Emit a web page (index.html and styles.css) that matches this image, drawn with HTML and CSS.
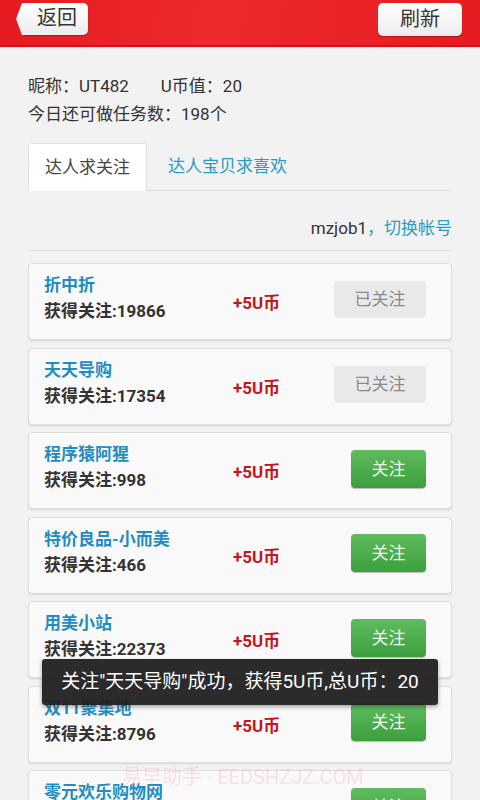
FILE: index.html
```html
<!DOCTYPE html>
<html lang="zh-CN">
<head>
<meta charset="utf-8">
<title>达人求关注</title>
<link rel="stylesheet" href="styles.css">
</head>
<body>
<div class="app">
  <header class="topbar">
    <div class="btn-back">返回</div>
    <div class="btn-refresh">刷新</div>
  </header>
  <main class="content">
    <div class="info">
      <div class="info-line"><span>昵称：UT482</span><span class="coins">U币值：20</span></div>
      <div class="info-line">今日还可做任务数：198个</div>
    </div>
    <nav class="tabs">
      <div class="tab active">达人求关注</div>
      <div class="tab">达人宝贝求喜欢</div>
    </nav>
    <div class="account">mzjob1<span class="link">，切换帐号</span></div>
    <ul class="list">
      <li class="card">
        <div class="meta"><div class="name">折中折</div><div class="count">获得关注:19866</div></div>
        <div class="reward">+5U币</div>
        <div class="btn done">已关注</div>
      </li>
      <li class="card">
        <div class="meta"><div class="name">天天导购</div><div class="count">获得关注:17354</div></div>
        <div class="reward">+5U币</div>
        <div class="btn done">已关注</div>
      </li>
      <li class="card">
        <div class="meta"><div class="name">程序猿阿猩</div><div class="count">获得关注:998</div></div>
        <div class="reward">+5U币</div>
        <div class="btn follow">关注</div>
      </li>
      <li class="card">
        <div class="meta"><div class="name">特价良品-小而美</div><div class="count">获得关注:466</div></div>
        <div class="reward">+5U币</div>
        <div class="btn follow">关注</div>
      </li>
      <li class="card">
        <div class="meta"><div class="name">用美小站</div><div class="count">获得关注:22373</div></div>
        <div class="reward">+5U币</div>
        <div class="btn follow">关注</div>
      </li>
      <li class="card">
        <div class="meta"><div class="name">双11聚集地</div><div class="count">获得关注:8796</div></div>
        <div class="reward">+5U币</div>
        <div class="btn follow">关注</div>
      </li>
      <li class="card">
        <div class="meta"><div class="name">零元欢乐购物网</div><div class="count">获得关注:5120</div></div>
        <div class="reward">+5U币</div>
        <div class="btn follow">关注</div>
      </li>
    </ul>
  </main>
  <div class="toast">关注"天天导购"成功，获得5U币,总U币：20</div>
  <div class="watermark">易早助手 · EEDSHZJZ.COM</div>
</div>
</body>
</html>
```
FILE: styles.css
```css
* { box-sizing: border-box; }
html, body { margin: 0; padding: 0; }
body {
  width: 480px;
  height: 800px;
  overflow: hidden;
  background: #f2f2f2;
  font-family: Roboto, "Noto Sans CJK SC", sans-serif;
  color: #333;
}
.app { position: relative; width: 480px; height: 800px; overflow: hidden; }

.topbar {
  height: 47px;
  display: flex;
  justify-content: space-between;
  align-items: flex-start;
  padding: 3px 18px 0 24px;
  background: linear-gradient(100deg, #e51b21 0%, #ee2a2e 45%, #e41c22 100%);
  border-bottom: 2px solid #c9151b;
  box-shadow: 0 1px 0 #f7d9d9;
}
.btn-back, .btn-refresh {
  position: relative;
  height: 32px;
  line-height: 31px;
  font-size: 20px;
  color: #333;
  text-align: center;
  background: linear-gradient(#ffffff, #ececec);
  border-radius: 5px;
  box-shadow: 0 1px 1px rgba(120,0,0,0.45);
}
.btn-back {
  width: 64px;
  border-radius: 0 5px 5px 0;
  padding-left: 2px;
}
.btn-back::before {
  content: "";
  position: absolute;
  left: -8px;
  top: 0;
  width: 10px;
  height: 32px;
  background: linear-gradient(#ffffff, #ececec);
  clip-path: polygon(100% 0, 60% 0, 0 50%, 60% 100%, 100% 100%);
}
.btn-refresh { width: 84px; height: 33px; line-height: 32px; }

.content { padding: 25px 28px 0 28px; }
.info { font-size: 17px; }
.info-line { line-height: 28px; }
.coins { margin-left: 32px; }

.tabs {
  margin-top: 15px;
  display: flex;
  align-items: flex-end;
  border-bottom: 1px solid #dcdcdc;
}
.tab {
  font-size: 17px;
  height: 47px;
  line-height: 46px;
  padding: 0 20px 0 20px;
  color: #2a9bc4;
}
.tab.active {
  width: 119px;
  padding: 0;
  text-align: center;
  color: #444;
  background: #fff;
  border: 1px solid #e0e0e0;
  border-bottom: none;
  border-radius: 4px 4px 0 0;
  margin-bottom: -1px;
  height: 48px;
}
.tab + .tab { padding-left: 21px; }

.account {
  text-align: right;
  font-size: 17px;
  line-height: 26px;
  padding: 24px 0 9px;
  border-bottom: 1px solid #dcdcdc;
  color: #333;
}
.account .link { color: #2a9bc4; }

.list {
  list-style: none;
  margin: 12px 0 0;
  padding: 0;
  display: flex;
  flex-direction: column;
  gap: 7.5px;
}
.card {
  height: 77px;
  display: grid;
  grid-template-columns: 189px 1fr auto;
  align-items: center;
  padding: 0 25px 0 15px;
  background: #f9f9f9;
  border: 1px solid #dedede;
  border-radius: 4px;
  box-shadow: 0 1px 2px rgba(0,0,0,0.13);
}
.meta { align-self: start; padding-top: 8px; }
.name, .count { font-size: 17px; line-height: 26px; font-weight: bold; white-space: nowrap; }
.name { color: #1f8dc0; }
.count { color: #333; }
.reward { color: #c4171d; font-size: 17px; font-weight: bold; }
.btn {
  font-size: 17px;
  text-align: center;
  border-radius: 4px;
  margin-bottom: 4px;
}
.btn.done {
  width: 92px;
  height: 37px;
  line-height: 37px;
  background: #e9e9e9;
  color: #8a8a8a;
}
.btn.follow {
  width: 75px;
  height: 38px;
  line-height: 38px;
  background: linear-gradient(#5fbb5f, #3c9f3c);
  color: #eef8ee;
  box-shadow: 0 1px 1px rgba(0,0,0,0.25);
}

.toast {
  position: absolute;
  left: 42px;
  top: 659px;
  width: 396px;
  height: 46px;
  line-height: 46px;
  text-align: center;
  font-size: 19px;
  color: #fff;
  background: rgba(32,32,32,0.95);
  border-radius: 3px;
  box-shadow: 0 2px 4px rgba(0,0,0,0.35);
}
.watermark {
  position: absolute;
  left: 122px;
  top: 764px;
  font-size: 20px;
  line-height: 26px;
  color: rgba(255, 110, 165, 0.2);
  white-space: nowrap;
}
```
